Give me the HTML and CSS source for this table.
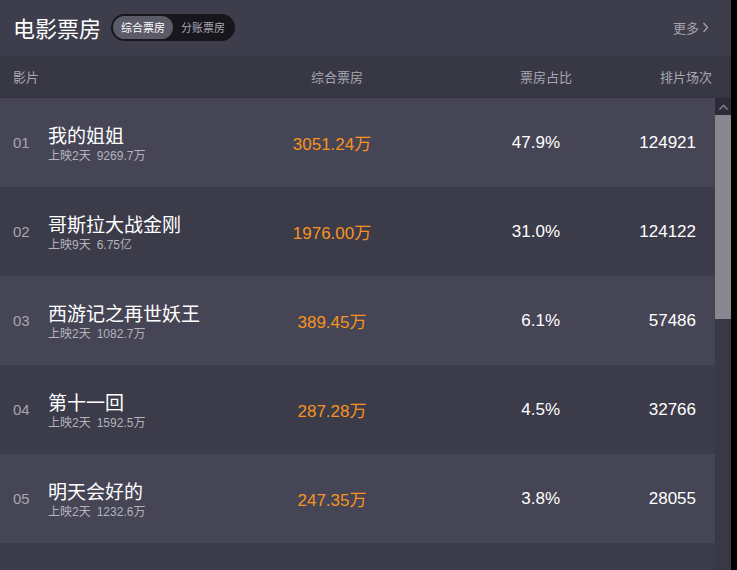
FILE: index.html
```html
<!DOCTYPE html>
<html lang="zh-CN">
<head>
    <meta charset="UTF-8">
    <meta name="viewport" content="width=device-width, initial-scale=1.0">
    <title>电影票房</title>
    <link rel="stylesheet" href="styles.css">
</head>
  <body>
    <main class="board">

      <header class="board-head">
        <h2 class="title">电影票房</h2>
        <div class="switch">
          <span class="on">综合票房</span>
          <span>分账票房</span>
        </div>
        <a class="more" href="#">更多
          <svg width="7" height="11" viewBox="0 0 7 11"><path d="M1.5 1 L5.5 5.5 L1.5 10" fill="none" stroke="currentColor" stroke-width="1.3"/></svg>
        </a>
      </header>

      <div class="cols">
        <span>影片</span>
        <span class="c-center">综合票房</span>
        <span class="c-right">票房占比</span>
        <span class="c-right">排片场次</span>
      </div>

      <div class="body">
        <ul class="list">
          <li class="row">
            <span class="rank">01</span>
            <div class="movie">
              <span class="name">我的姐姐</span>
              <span class="sub">上映2天<i>9269.7万</i></span>
            </div>
            <span class="box">3051.24万</span>
            <span class="num">47.9%</span>
            <span class="num">124921</span>
          </li>
          <li class="row">
            <span class="rank">02</span>
            <div class="movie">
              <span class="name">哥斯拉大战金刚</span>
              <span class="sub">上映9天<i>6.75亿</i></span>
            </div>
            <span class="box">1976.00万</span>
            <span class="num">31.0%</span>
            <span class="num">124122</span>
          </li>
          <li class="row">
            <span class="rank">03</span>
            <div class="movie">
              <span class="name">西游记之再世妖王</span>
              <span class="sub">上映2天<i>1082.7万</i></span>
            </div>
            <span class="box">389.45万</span>
            <span class="num">6.1%</span>
            <span class="num">57486</span>
          </li>
          <li class="row">
            <span class="rank">04</span>
            <div class="movie">
              <span class="name">第十一回</span>
              <span class="sub">上映2天<i>1592.5万</i></span>
            </div>
            <span class="box">287.28万</span>
            <span class="num">4.5%</span>
            <span class="num">32766</span>
          </li>
          <li class="row">
            <span class="rank">05</span>
            <div class="movie">
              <span class="name">明天会好的</span>
              <span class="sub">上映2天<i>1232.6万</i></span>
            </div>
            <span class="box">247.35万</span>
            <span class="num">3.8%</span>
            <span class="num">28055</span>
          </li>
        </ul>

        <div class="scrollbar">
          <div class="up">
            <svg width="9" height="6" viewBox="0 0 9 6"><path d="M0.5 5.5 L4.5 1.5 L8.5 5.5" fill="none" stroke="currentColor" stroke-width="1.6"/></svg>
          </div>
          <div class="thumb"></div>
        </div>
      </div>

    </main>
  </body>
</html>
```

FILE: styles.css
```css
* {
  margin: 0;
  padding: 0;
  box-sizing: border-box;
}

html, body {
  height: 100%;
  background-color: #000000;
}

body {
  font-family: "Liberation Sans", "Noto Sans CJK SC", sans-serif;
  overflow: hidden;
}

.board {
  width: 731px;
  height: 570px;
  display: flex;
  flex-direction: column;
  background-color: #3c3b4a;
  color: #ffffff;
}

/* top bar */
.board-head {
  height: 56px;
  display: flex;
  align-items: center;
  padding: 0 22px 14px 13px;
  background-color: #3e3d4b;
}

.title {
  font-family: "Noto Sans CJK SC", sans-serif;
  font-size: 22px;
  font-weight: normal;
  line-height: 1;
  margin-top: 12px;
}

.switch {
  display: flex;
  align-items: center;
  height: 27px;
  margin: 12px 0 0 10px;
  padding: 2px;
  border-radius: 14px;
  background-color: #17161d;
}

.switch span {
  font-family: "Noto Sans CJK SC", sans-serif;
  font-size: 11px;
  line-height: 23px;
  padding: 0 8px;
  color: #a9a8b2;
  border-radius: 12px;
}

.switch .on {
  color: #ffffff;
  background-color: #5b5a67;
}

.more {
  margin: 12px 0 0 auto;
  display: flex;
  align-items: center;
  gap: 3px;
  font-family: "Noto Sans CJK SC", sans-serif;
  font-size: 13px;
  color: #a3a2ad;
  text-decoration: none;
}

/* column titles */
.cols {
  height: 42px;
  display: grid;
  grid-template-columns: 267px 114px 178px 140px;
  align-items: center;
  padding: 0 19px 0 13px;
  background-color: #383744;
  border-bottom: 1px solid #302f3b;
  font-family: "Noto Sans CJK SC", sans-serif;
  font-size: 13px;
  color: #a8a7b2;
}

.c-center {
  text-align: center;
}

.c-right {
  text-align: right;
}

/* list */
.body {
  flex: 1;
  display: flex;
  min-height: 0;
}

.list {
  flex: 1;
  list-style: none;
}

.row {
  height: 89px;
  display: grid;
  grid-template-columns: 35px 232px 104px 176px 136px;
  align-items: center;
  padding: 0 19px 0 13px;
}

.row:nth-child(odd) {
  background-color: #464556;
}

.row:nth-child(even) {
  background-color: #3c3b4a;
}

.rank {
  font-size: 15px;
  color: #a6a5af;
}

.movie {
  display: flex;
  flex-direction: column;
}

.name {
  font-family: "Noto Sans CJK SC", sans-serif;
  font-size: 19px;
  line-height: 26px;
}

.sub {
  font-size: 12px;
  line-height: 16px;
  color: #b4b3bc;
}

.sub i {
  font-style: normal;
  margin-left: 6px;
}

.box {
  text-align: center;
  font-size: 17px;
  color: #f7931e;
}

.num {
  text-align: right;
  font-size: 17px;
  color: #ffffff;
}

/* fake scrollbar */
.scrollbar {
  width: 16px;
  display: flex;
  flex-direction: column;
  background-color: #393846;
}

.up {
  height: 17px;
  display: flex;
  align-items: center;
  justify-content: center;
  background-color: #2c2b37;
  color: #7b7a86;
}

.thumb {
  height: 204px;
  background-color: #88878f;
}
```
